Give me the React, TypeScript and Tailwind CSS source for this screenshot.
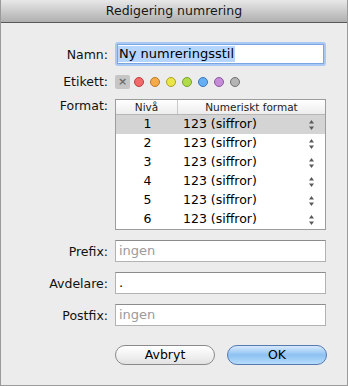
import React from 'react';

const font = { fontFamily: '"DejaVu Sans", Verdana, sans-serif' };

const labels = [
  { color: 'bg-[#f2696a]', ring: 'border-[#b8403f]' },
  { color: 'bg-[#f6ab4a]', ring: 'border-[#b8782a]' },
  { color: 'bg-[#ece548]', ring: 'border-[#aaa22a]' },
  { color: 'bg-[#b0dc4a]', ring: 'border-[#78a02a]' },
  { color: 'bg-[#67aff4]', ring: 'border-[#3a78b8]' },
  { color: 'bg-[#c58ad8]', ring: 'border-[#8a5a9c]' },
  { color: 'bg-[#b4b4b4]', ring: 'border-[#707070]' },
];

const Stepper: React.FC = () => (
  <svg width="7" height="12" viewBox="0 0 7 12" className="text-[#5a5a5a]">
    <path d="M3.5 1 L6 4.5 L1 4.5 Z" fill="currentColor" />
    <path d="M3.5 11 L6 7.5 L1 7.5 Z" fill="currentColor" />
  </svg>
);

const Field: React.FC<{ value: string; placeholder?: boolean }> = ({ value, placeholder }) => (
  <div
    className={`h-[22px] bg-white border border-[#b2b2b2] border-t-[#8c8c8c] pl-[3px] flex items-center text-[13px] ${
      placeholder ? 'text-[#9a9a9a]' : 'text-black'
    }`}
  >
    {value}
  </div>
);

const Label: React.FC<{ children: React.ReactNode; className?: string }> = ({ children, className = '' }) => (
  <div className={`text-right text-[12.5px] text-[#111] leading-[15px] ${className}`}>{children}</div>
);

export default function App() {
  const rows = [1, 2, 3, 4, 5, 6];

  return (
    <div
      className="w-[348px] h-[386px] bg-[#ececec] border-x border-b border-[#9a9a9a] flex flex-col overflow-hidden"
      style={font}
    >
      <header className="h-[23px] shrink-0 bg-gradient-to-b from-[#e8e8e8] to-[#b0b0b0] border-b border-[#575757] flex items-center justify-center">
        <span className="text-[12.5px] text-[#161616]">Redigering numrering</span>
      </header>

      <div className="grid grid-cols-[107px_211px] gap-x-[7px] items-center">
        <Label className="mt-[19px]">Namn:</Label>
        <div className="mt-[19px] h-[24px] rounded-[3px] bg-[#a9c9f4] p-[2px]">
          <div className="h-full bg-white border border-[#7aa4e2] flex items-center">
            <span className="bg-[#b5d5ff] text-[13px] text-black leading-[16px] pl-[1px] pr-[1px]">
              Ny numreringsstil
            </span>
          </div>
        </div>

        <Label className="mt-[8px]">Etikett:</Label>
        <div className="mt-[8px] h-[14px] flex items-center gap-[6px]">
          <div className="w-[15px] h-[14px] rounded-[2px] bg-[#c6c6c6] flex items-center justify-center text-[#6c6c6c] text-[11px] leading-none font-bold mr-[-2px]">
            ×
          </div>
          {labels.map((l, i) => (
            <span key={i} className={`w-[10px] h-[10px] rounded-full border ${l.color} ${l.ring}`} />
          ))}
        </div>

        <Label className="self-start mt-[9px]">Format:</Label>
        <div className="mt-[10px] border border-[#9c9c9c] bg-white">
          <div className="h-[15px] grid grid-cols-[62px_1fr] bg-gradient-to-b from-white to-[#ededed] border-b border-[#b6b6b6] text-[10.5px] leading-[14px] text-[#1c1c1c]">
            <div className="text-center border-r border-[#c9c9c9]">Nivå</div>
            <div className="text-center">Numeriskt format</div>
          </div>
          {rows.map(n => (
            <div
              key={n}
              className={`h-[19px] grid grid-cols-[63px_1fr_17px] items-center text-[12.5px] text-black ${
                n === 1 ? 'bg-[#d4d4d4]' : 'bg-white'
              }`}
            >
              <div className="text-center">{n}</div>
              <div className="pl-[4px]">123 (siffror)</div>
              <div className="flex justify-start">
                <Stepper />
              </div>
            </div>
          ))}
        </div>

        <Label className="mt-[10px]">Prefix:</Label>
        <div className="mt-[10px]">
          <Field value="ingen" placeholder />
        </div>

        <Label className="mt-[10px]">Avdelare:</Label>
        <div className="mt-[10px]">
          <Field value="." />
        </div>

        <Label className="mt-[10px]">Postfix:</Label>
        <div className="mt-[10px]">
          <Field value="ingen" placeholder />
        </div>
      </div>

      <div className="mt-[19px] pl-[114px] flex gap-[12px]">
        <button className="w-[100px] h-[20px] rounded-full border border-[#8a8a8a] bg-gradient-to-b from-white via-[#f2f2f2] to-[#e2e2e2] text-[12.5px] text-black leading-none">
          Avbryt
        </button>
        <button className="w-[100px] h-[20px] rounded-full border border-[#5679b0] bg-gradient-to-b from-[#d6e9fc] via-[#8dc1f2] to-[#b7dcfc] text-[12.5px] text-black leading-none">
          OK
        </button>
      </div>
    </div>
  );
}
